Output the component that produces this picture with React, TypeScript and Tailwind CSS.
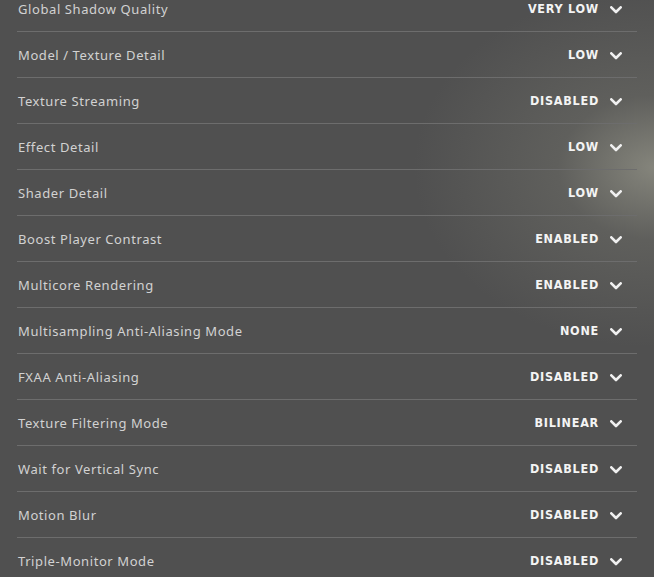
const settings: [string, string][] = [
  ['Global Shadow Quality', 'VERY LOW'],
  ['Model / Texture Detail', 'LOW'],
  ['Texture Streaming', 'DISABLED'],
  ['Effect Detail', 'LOW'],
  ['Shader Detail', 'LOW'],
  ['Boost Player Contrast', 'ENABLED'],
  ['Multicore Rendering', 'ENABLED'],
  ['Multisampling Anti-Aliasing Mode', 'NONE'],
  ['FXAA Anti-Aliasing', 'DISABLED'],
  ['Texture Filtering Mode', 'BILINEAR'],
  ['Wait for Vertical Sync', 'DISABLED'],
  ['Motion Blur', 'DISABLED'],
  ['Triple-Monitor Mode', 'DISABLED'],
]

function Chevron() {
  return (
    <svg width="12" height="8" viewBox="0 0 12 8" className="text-[#f0f0f0]">
      <path d="M1.3 1.3 L6 6 L10.7 1.3" fill="none" stroke="currentColor" strokeWidth="2.6" strokeLinecap="round" strokeLinejoin="round" />
    </svg>
  )
}

function SettingRow({ label, value }: { label: string; value: string }) {
  return (
    <div className="flex h-[46px] items-center justify-between border-b border-[#6d6d6d] pl-[1px] pr-[15px] pt-[2px]">
      <span className="text-[13px] tracking-[0.045em] text-[#d2d2d2] [font-family:'Noto_Sans',sans-serif]">
        {label}
      </span>
      <div className="flex items-center gap-[11px]">
        <span className="text-[12.5px] font-bold tracking-[0.06em] text-[#f4f4f4] [font-family:'DejaVu_Sans_Condensed','DejaVu_Sans',sans-serif]">
          {value}
        </span>
        <Chevron />
      </div>
    </div>
  )
}

export default function App() {
  return (
    <div className="h-[577px] w-[654px] overflow-hidden bg-[#505050] bg-[radial-gradient(ellipse_240px_180px_at_100%_29%,rgba(150,150,138,0.75)_0%,rgba(120,120,112,0.38)_40%,rgba(80,80,80,0)_100%)] px-[17px]">
      <div className="-mt-[14px]">
        {settings.map(([label, value]) => (
          <SettingRow key={label} label={label} value={value} />
        ))}
      </div>
    </div>
  )
}
